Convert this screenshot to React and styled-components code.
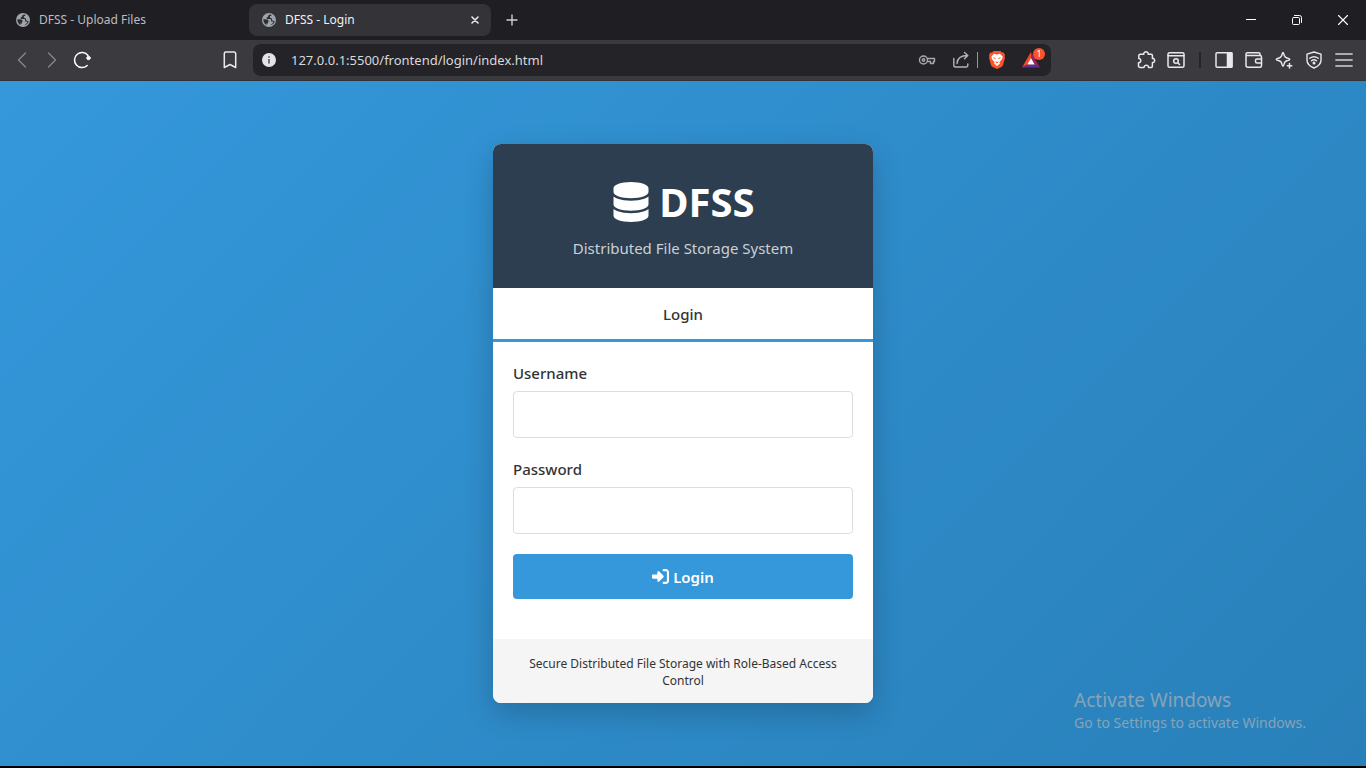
import React from 'react';
import styled, { createGlobalStyle } from 'styled-components';
import { FaDatabase, FaRightToBracket } from 'react-icons/fa6';

const GlobalStyle = createGlobalStyle`
  *, *::before, *::after { box-sizing: border-box; }
  body {
    margin: 0;
    background: #000;
    color: #333;
    font-family: "Segoe UI", "Noto Sans", "Open Sans", sans-serif;
  }
  button, input { font: inherit; }
  h1, p { margin: 0; }
`;

const Screen = styled.div`
  display: flex;
  flex-direction: column;
  min-height: 100vh;
`;

/* ---------- browser chrome ---------- */

const TabStrip = styled.div`
  display: flex;
  align-items: center;
  height: 40px;
  background: #1f1e23;
`;

const BrowserTab = styled.div`
  display: flex;
  align-items: center;
  gap: 8px;
  flex: 0 1 ${(p) => (p.$active ? '242px' : '249px')};
  height: 32px;
  padding: 0 8px 0 ${(p) => (p.$active ? '12px' : '15px')};
  border-radius: 8px;
  background: ${(p) => (p.$active ? '#343338' : 'transparent')};
  color: ${(p) => (p.$active ? '#f1f1f3' : '#bdbcc0')};
  font-size: 12px;
  line-height: 16px;
  white-space: nowrap;
`;

const TabTitle = styled.span`
  flex: 1;
`;

const IconButton = styled.button`
  display: flex;
  align-items: center;
  justify-content: center;
  flex: none;
  width: ${(p) => p.$width || 30}px;
  height: ${(p) => p.$height || 30}px;
  padding: 0;
  border: 0;
  background: none;
  color: ${(p) => p.$color || '#e9e9eb'};
`;

const WindowControls = styled.div`
  display: flex;
  margin-left: auto;
`;

const Toolbar = styled.div`
  display: flex;
  align-items: center;
  height: 41px;
  padding: 0 7px;
  border-bottom: 1px solid #323135;
  background: #3b3a3f;
`;

const ButtonGroup = styled.div`
  display: flex;
  align-items: center;
`;

const AddressArea = styled.div`
  display: flex;
  align-items: center;
  flex: 1;
  gap: 8px;
  margin: 0 80px 0 118px;
`;

const AddressBar = styled.div`
  display: flex;
  align-items: center;
  flex: 1;
  height: 32px;
  padding: 0 4px 0 8px;
  border-radius: 8px;
  background: #242328;
`;

const AddressInput = styled.input`
  flex: 1;
  min-width: 0;
  height: 20px;
  margin-left: 14px;
  padding: 0;
  border: 0;
  outline: 0;
  background: none;
  color: #d8d8db;
  font-size: 13px;
  line-height: 20px;
`;

const BarDivider = styled.span`
  width: 1px;
  height: 16px;
  background: #98979b;
`;

const ToolbarDivider = styled.span`
  width: 2px;
  height: 16px;
  margin: 0 8px;
  background: #242328;
`;

/* ---------- login page ---------- */

const Page = styled.main`
  position: relative;
  display: flex;
  align-items: center;
  justify-content: center;
  flex: 1;
  margin-bottom: 2px;
  padding: 20px;
  background: linear-gradient(135deg, #3498db, #2980b9);
`;

const Card = styled.section`
  width: 100%;
  max-width: 380px;
  overflow: hidden;
  border-radius: 8px;
  background: #fff;
  box-shadow: 0 10px 30px rgba(0, 0, 0, 0.2);
`;

const CardHeader = styled.header`
  padding: 30px;
  background: #2c3e50;
  color: #fff;
  text-align: center;
`;

const Brand = styled.h1`
  display: flex;
  align-items: center;
  justify-content: center;
  gap: 8px;
  margin-bottom: 8px;
  font-size: 40px;
  font-weight: 700;
  line-height: 56px;
`;

const Tagline = styled.p`
  color: #cbd0d5;
  font-size: 15px;
  line-height: 20px;
`;

const FormTab = styled.button`
  display: block;
  width: 100%;
  height: 54px;
  padding: 0;
  border: 0;
  border-bottom: 3px solid #3498db;
  background: #fff;
  color: #333;
  font-size: 15px;
  font-weight: 500;
  line-height: 20px;
`;

const Form = styled.form`
  display: flex;
  flex-direction: column;
  gap: 20px;
  padding: 20px 20px 40px;
`;

const Field = styled.div`
  display: flex;
  flex-direction: column;
  gap: 6px;
`;

const Label = styled.label`
  font-size: 15px;
  font-weight: 500;
  line-height: 23px;
`;

const TextBox = styled.input`
  width: 100%;
  height: 47px;
  padding: 12px;
  border: 1px solid #ddd;
  border-radius: 4px;
  background: #fff;
`;

const SubmitButton = styled.button`
  display: flex;
  align-items: center;
  justify-content: center;
  gap: 4px;
  height: 45px;
  border: 0;
  border-radius: 4px;
  background: #3498db;
  color: #fff;
  font-size: 15px;
  font-weight: 600;
  line-height: 20px;
`;

const CardFooter = styled.footer`
  padding: 16px 20px 14px;
  background: #f5f5f5;
  font-size: 12px;
  line-height: 17px;
  text-align: center;
`;

const Watermark = styled.aside`
  position: absolute;
  right: 60px;
  bottom: 33px;
  color: #86a3b8;
  font-size: 14px;
  line-height: 20px;
`;

const WatermarkTitle = styled.p`
  font-size: 19px;
  line-height: 26px;
`;

/* ---------- icons ---------- */

function Icon({ size = 20, box = 20, width = 1.4, children }) {
  return (
    <svg
      width={size}
      height={size}
      viewBox={`0 0 ${box} ${box}`}
      fill="none"
      stroke="currentColor"
      strokeWidth={width}
      strokeLinecap="round"
      strokeLinejoin="round"
      aria-hidden="true"
    >
      {children}
    </svg>
  );
}

function GlobeIcon() {
  return (
    <svg width="16" height="16" viewBox="0 0 16 16" aria-hidden="true">
      <circle cx="8" cy="8" r="7" fill="#9fa4aa" />
      <path
        d="M2.300 7.200h2.700c1.600 0 2.800 1 3 2.400h-1v1.800h-1.500v1.700C3.700 12 2.300 10 2.300 7.200z"
        fill="#2f2e33"
      />
      <path
        d="M9.800 2.600C7.600 2.800 7 3.600 7 4.900H5.800v2h3.500c.6 0 .8.500.8 1.200v1.500h2v1.200l-2.600 2.500c2.300-.5 3.900-2.200 4.200-4.400l-2.200-.2-.6-2.100-2-1.200.1-1.300h1.600z"
        fill="#2f2e33"
      />
    </svg>
  );
}

function InfoIcon() {
  return (
    <svg width="16" height="16" viewBox="0 0 16 16" aria-hidden="true">
      <circle cx="8" cy="8" r="7" fill="#e4e4e7" />
      <path d="M8 7v4.500M8 4.200v1.600" stroke="#55545a" strokeWidth="1.600" />
    </svg>
  );
}

function TriangleIcon() {
  return (
    <svg width="26" height="26" viewBox="0 0 26 26" aria-hidden="true">
      <path d="M12 5 3 20.500l5.300-3L12 11z" fill="#ff4724" />
      <path d="M12 5l9 15.500-5.300-3L12 11z" fill="#9e1f63" />
      <path d="M3 20.500h18l-5.300-3H8.300z" fill="#662d91" />
      <path d="M12 11l3.700 6.500H8.300z" fill="#fff" />
      <circle cx="20" cy="7" r="6" fill="#fb542b" />
      <text x="20" y="10" textAnchor="middle" fill="#fff" fontSize="9">1</text>
    </svg>
  );
}

function BraveIcon() {
  return (
    <svg width="18" height="18" viewBox="0 0 18 18" aria-hidden="true">
      <path d="M5.500 0h7l1.500 1.600 1.700-.2L17 4l-.4 1.500.4 1.200-2 7.200c-.3 1-1 1.600-1.700 2.100L9 18l-4.300-2c-.7-.5-1.400-1.100-1.700-2.100L1 6.700l.4-1.200L1 4l1.300-2.600 1.700.2z" fill="#fb542b" />
      <path d="M6 2.800l3 .6 3-.6 2.600 2.800-.4 2.100-1.900 2.600-1 .8.700 1.300L9 15l-3-2.600.7-1.300-1-.8-1.900-2.600-.4-2.100z" fill="#fff" />
      <path d="M5 6.300l2.700.7-.2.900-1.500-.4zM13 6.300l-2.700.7.2.9 1.500-.4zM7.300 10.300l1.700.8 1.700-.8-.9 1.600H8.200z" fill="#fb542b" />
    </svg>
  );
}

function BrowserChrome() {
  return (
    <header>
      <TabStrip>
        <BrowserTab>
          <GlobeIcon />
          <TabTitle>DFSS - Upload Files</TabTitle>
        </BrowserTab>
        <BrowserTab $active>
          <GlobeIcon />
          <TabTitle>DFSS - Login</TabTitle>
          <IconButton $width={16} $height={16} aria-label="Close tab">
            <Icon size={16} box={16} width={1.6}><path d="M5 5l6 6M11 5l-6 6" /></Icon>
          </IconButton>
        </BrowserTab>
        <IconButton $width={42} $color="#cfcfd2" aria-label="New tab">
          <Icon size={16} box={16}><path d="M8 3v10M3 8h10" /></Icon>
        </IconButton>
        <WindowControls>
          <IconButton $width={46} $height={40} $color="#fff" aria-label="Minimize">
            <Icon size={12} box={12} width={1}><path d="M1 5.500h10" strokeLinecap="butt" /></Icon>
          </IconButton>
          <IconButton $width={46} $height={40} $color="#fff" aria-label="Restore">
            <Icon size={12} box={12} width={1}>
              <rect x="1.500" y="3.500" width="7" height="7" rx="1" />
              <path d="M3.500 1.500h5a2 2 0 0 1 2 2v5" />
            </Icon>
          </IconButton>
          <IconButton $width={46} $height={40} $color="#fff" aria-label="Close window">
            <Icon size={12} box={12} width={1.1}><path d="M1.500 1.500l9 9M10.500 1.500l-9 9" /></Icon>
          </IconButton>
        </WindowControls>
      </TabStrip>

      <Toolbar>
        <ButtonGroup>
          <IconButton $color="#85848a" aria-label="Back">
            <Icon><path d="M13.500 3 6.500 10l7 7" /></Icon>
          </IconButton>
          <IconButton $color="#85848a" aria-label="Forward">
            <Icon><path d="M6.500 3l7 7-7 7" /></Icon>
          </IconButton>
          <IconButton $color="#fff" aria-label="Reload">
            <Icon width={1.5}>
              <path d="M15.200 15.500A7.500 7.500 0 1 1 16 5.500" />
              <circle cx="16.500" cy="8" r="1.700" fill="currentColor" strokeWidth="1" />
            </Icon>
          </IconButton>
        </ButtonGroup>

        <AddressArea>
          <IconButton aria-label="Bookmark this page">
            <Icon width={1.500}><path d="M4.300 3.500A1.500 1.500 0 0 1 5.800 2h8.400a1.500 1.500 0 0 1 1.500 1.500V17.500L10 14.500l-5.700 3z" /></Icon>
          </IconButton>
          <AddressBar>
            <InfoIcon />
            <AddressInput type="text" aria-label="Address" defaultValue="127.0.0.1:5500/frontend/login/index.html" />
            <IconButton $width={34} $color="#a9a8ad" aria-label="Passwords">
              <Icon>
                <circle cx="6.500" cy="10" r="4" />
                <circle cx="6.500" cy="10" r="1.200" />
                <path d="M10.500 8.500h7v3h-1v2h-3v-2h-3" />
              </Icon>
            </IconButton>
            <IconButton $width={33} $color="#b5b4b9" aria-label="Share">
              <Icon>
                <path d="M2.800 8.500v7a1.500 1.500 0 0 0 1.500 1.500h11a1.500 1.500 0 0 0 1.500-1.500V14M6 13.500c.3-5 4-8 10.500-8M13.500 2.500l3.300 3-3.300 3.300" />
              </Icon>
            </IconButton>
            <BarDivider />
            <IconButton $width={38} aria-label="Brave Shields"><BraveIcon /></IconButton>
            <IconButton $width={31} aria-label="Brave Rewards"><TriangleIcon /></IconButton>
          </AddressBar>
        </AddressArea>

        <ButtonGroup>
          <IconButton aria-label="Extensions">
            <Icon width={1.500}>
              <path d="M4.500 4.300h3.300c-.6-3.300 5-3.300 4.400 0h3a1.200 1.200 0 0 1 1.200 1.200v2.900c3-.4 3 4.600 0 4.200v3.600a1.200 1.200 0 0 1-1.200 1.200h-2.700c.2-3-4.600-3-4.400 0H4a1.500 1.500 0 0 1-1.500-1.500v-3.200c3 .2 3-4.200.3-4.200V5.700a1.400 1.400 0 0 1 1.700-1.400z" />
            </Icon>
          </IconButton>
          <IconButton aria-label="Search page">
            <Icon width={1.500}>
              <rect x="2" y="2.800" width="16" height="14.500" rx="1.500" />
              <path d="M2 5.800h16" />
              <circle cx="10" cy="11" r="2.300" />
              <path d="M12 13l1.500 1.500" />
            </Icon>
          </IconButton>
          <ToolbarDivider />
          <IconButton aria-label="Side panel">
            <Icon width={1.500}>
              <rect x="2" y="2.800" width="16" height="14.500" rx="1" />
              <path d="M13.500 3h4.300v14h-4.300z" fill="currentColor" />
            </Icon>
          </IconButton>
          <IconButton aria-label="Wallet">
            <Icon width={1.500}>
              <path d="M16 5.500V4a1.200 1.200 0 0 0-1.200-1.200H3.500A1.500 1.500 0 0 0 2 4.300V15.300a2 2 0 0 0 2 2h12a1.500 1.500 0 0 0 1.500-1.500V7A1.500 1.500 0 0 0 16 5.500H3.500A1.500 1.500 0 0 1 2 4.300" />
              <path d="M17.500 9H13a1.500 1.500 0 0 0-1.500 1.500v1A1.500 1.500 0 0 0 13 13h4.500" />
            </Icon>
          </IconButton>
          <IconButton aria-label="Leo AI">
            <Icon width={1.500}>
              <path d="M9 2.500c.5 0 .8 1.200 1.300 3 .5 1.500 1 2 2.500 2.500 1.800.5 3 .8 3 1.400s-1.200.9-3 1.400c-1.500.5-2 1-2.500 2.500-.5 1.800-.8 3-1.300 3s-.8-1.200-1.300-3c-.5-1.500-1-2-2.500-2.500-1.800-.5-3-.8-3-1.400s1.200-.9 3-1.400c1.500-.5 2-1 2.500-2.500.5-1.800.8-3 1.300-3z" />
              <path d="M15.500 13.500v4.500M13.300 15.700h4.500" />
            </Icon>
          </IconButton>
          <IconButton aria-label="VPN">
            <Icon width={1.400}>
              <path d="M10 2l7 2.200V10c0 4-3 6.500-7 8-4-1.500-7-4-7-8V4.200z" />
              <path d="M5.800 8.300c2.600-2 5.800-2 8.400 0M7.500 10.800c1.500-1.200 3.500-1.200 5 0" />
              <circle cx="10" cy="13" r="0.800" fill="currentColor" />
            </Icon>
          </IconButton>
          <IconButton $color="#d4d4d7" aria-label="Menu">
            <Icon width={1.700}><path d="M2 4h16M2 10h16M2 16h16" /></Icon>
          </IconButton>
        </ButtonGroup>
      </Toolbar>
    </header>
  );
}

export default function App() {
  return (
    <Screen>
      <GlobalStyle />
      <BrowserChrome />
      <Page>
        <Card>
          <CardHeader>
            <Brand><FaDatabase size={40} aria-hidden="true" />DFSS</Brand>
            <Tagline>Distributed File Storage System</Tagline>
          </CardHeader>
          <FormTab type="button">Login</FormTab>
          <Form onSubmit={(e) => e.preventDefault()}>
            <Field>
              <Label htmlFor="username">Username</Label>
              <TextBox id="username" type="text" />
            </Field>
            <Field>
              <Label htmlFor="password">Password</Label>
              <TextBox id="password" type="password" />
            </Field>
            <SubmitButton type="submit"><FaRightToBracket size={17} aria-hidden="true" />Login</SubmitButton>
          </Form>
          <CardFooter>Secure Distributed File Storage with Role-Based Access Control</CardFooter>
        </Card>
        <Watermark>
          <WatermarkTitle>Activate Windows</WatermarkTitle>
          <p>Go to Settings to activate Windows.</p>
        </Watermark>
      </Page>
    </Screen>
  );
}
